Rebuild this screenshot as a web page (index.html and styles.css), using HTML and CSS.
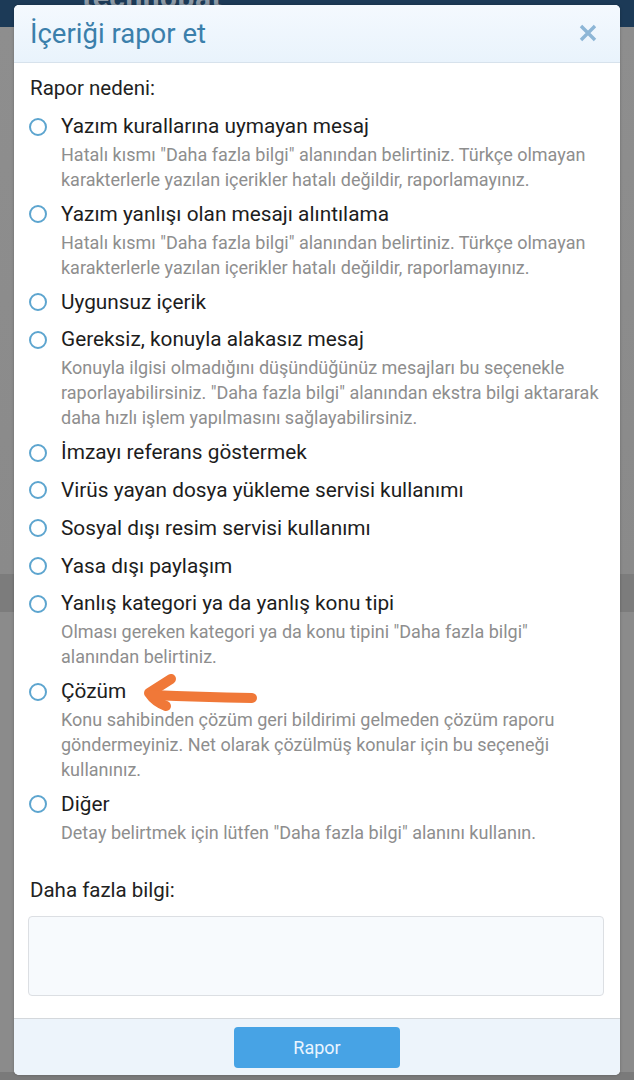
FILE: index.html
```html
<!DOCTYPE html>
<html lang="tr">
<head>
<meta charset="utf-8">
<title>İçeriği rapor et</title>
<link rel="stylesheet" href="styles.css">
</head>
<body>
<div class="backdrop-logo">technopat</div>
<div class="modal">
  <div class="modal-header">
    <h1 class="modal-title">İçeriği rapor et</h1>
    <span class="close" aria-label="Kapat">
      <svg width="18" height="18" viewBox="0 0 18 18"><path d="M2 2 L16 16 M16 2 L2 16" stroke="#8db6d6" stroke-width="3.4" stroke-linecap="butt" fill="none"/></svg>
    </span>
  </div>
  <div class="modal-body">
    <div class="field-label">Rapor nedeni:</div>
    <ul class="reasons">
      <li class="reason"><span class="radio"></span><div class="reason-text"><div class="reason-title">Yazım kurallarına uymayan mesaj</div><div class="reason-desc">Hatalı kısmı "Daha fazla bilgi" alanından belirtiniz. Türkçe olmayan<br>karakterlerle yazılan içerikler hatalı değildir, raporlamayınız.</div></div></li>
      <li class="reason"><span class="radio"></span><div class="reason-text"><div class="reason-title">Yazım yanlışı olan mesajı alıntılama</div><div class="reason-desc">Hatalı kısmı "Daha fazla bilgi" alanından belirtiniz. Türkçe olmayan<br>karakterlerle yazılan içerikler hatalı değildir, raporlamayınız.</div></div></li>
      <li class="reason"><span class="radio"></span><div class="reason-text"><div class="reason-title">Uygunsuz içerik</div></div></li>
      <li class="reason"><span class="radio"></span><div class="reason-text"><div class="reason-title">Gereksiz, konuyla alakasız mesaj</div><div class="reason-desc">Konuyla ilgisi olmadığını düşündüğünüz mesajları bu seçenekle<br>raporlayabilirsiniz. "Daha fazla bilgi" alanından ekstra bilgi aktararak<br>daha hızlı işlem yapılmasını sağlayabilirsiniz.</div></div></li>
      <li class="reason"><span class="radio"></span><div class="reason-text"><div class="reason-title">İmzayı referans göstermek</div></div></li>
      <li class="reason"><span class="radio"></span><div class="reason-text"><div class="reason-title">Virüs yayan dosya yükleme servisi kullanımı</div></div></li>
      <li class="reason"><span class="radio"></span><div class="reason-text"><div class="reason-title">Sosyal dışı resim servisi kullanımı</div></div></li>
      <li class="reason"><span class="radio"></span><div class="reason-text"><div class="reason-title">Yasa dışı paylaşım</div></div></li>
      <li class="reason"><span class="radio"></span><div class="reason-text"><div class="reason-title">Yanlış kategori ya da yanlış konu tipi</div><div class="reason-desc">Olması gereken kategori ya da konu tipini "Daha fazla bilgi"<br>alanından belirtiniz.</div></div></li>
      <li class="reason"><span class="radio"></span><div class="reason-text"><div class="reason-title">Çözüm</div><div class="reason-desc">Konu sahibinden çözüm geri bildirimi gelmeden çözüm raporu<br>göndermeyiniz. Net olarak çözülmüş konular için bu seçeneği<br>kullanınız.</div></div></li>
      <li class="reason"><span class="radio"></span><div class="reason-text"><div class="reason-title">Diğer</div><div class="reason-desc">Detay belirtmek için lütfen "Daha fazla bilgi" alanını kullanın.</div></div></li>
    </ul>
    <div class="field-label more">Daha fazla bilgi:</div>
    <textarea class="more-input"></textarea>
  </div>
  <div class="modal-footer">
    <button class="submit">Rapor</button>
  </div>
</div>
<svg class="arrow" width="125" height="45" viewBox="0 0 125 45">
  <path d="M31 7 L9 21 Q15 30 26 34" stroke="#f07838" stroke-width="10" stroke-linecap="round" stroke-linejoin="round" fill="none"/>
  <path d="M12 23 Q60 25 112 26" stroke="#f07838" stroke-width="10" stroke-linecap="round" fill="none"/>
</svg>
</body>
</html>
```
FILE: styles.css
```css
html, body {
  margin: 0;
  padding: 0;
}
body {
  width: 634px;
  height: 1080px;
  overflow: hidden;
  font-family: Roboto, "Noto Sans", sans-serif;
  background:
    linear-gradient(to bottom,
      #1c3a57 0, #1c3a57 27px,
      #8e8e8e 27px, #8a8a8a 574px,
      #7c7c7c 574px, #7c7c7c 612px,
      #8b8b8b 612px, #8b8b8b 1072px,
      #7a7a7a 1072px);
  position: relative;
  padding-top: 5px;
  box-sizing: border-box;
}
.backdrop-logo {
  position: absolute;
  left: 82px;
  top: -20px;
  font-size: 30px;
  font-weight: 700;
  color: #8d9aa6;
  letter-spacing: 0.5px;
}
.modal {
  position: relative;
  margin: 0 14px;
  width: 606px;
  background: #fff;
  border-radius: 5px;
  overflow: hidden;
  box-shadow: 0 0 3px rgba(0,0,0,0.25);
}
.modal-header {
  height: 57px;
  border-bottom: 1px solid #d7e2ec;
  background: linear-gradient(to bottom, #f4f9fe, #e9f3fc);
  display: flex;
  align-items: center;
  justify-content: space-between;
  padding: 0 23px 0 16px;
}
.modal-title {
  margin: 0;
  font-size: 27.5px;
  font-weight: 400;
  color: #3b7fab;
  line-height: 32px;
}
.close {
  display: flex;
  width: 18px;
  height: 18px;
  margin-top: -1px;
}
.modal-body {
  padding: 11px 15px 22px 15px;
}
.field-label {
  font-size: 20.5px;
  line-height: 28px;
  color: #222;
  margin-left: 1px;
  margin-bottom: 9px;
}
.field-label.more {
  margin-top: 31px;
  margin-bottom: 12px;
}
.reasons {
  list-style: none;
  margin: 0;
  padding: 0;
  display: flex;
  flex-direction: column;
  gap: 6.8px;
}
.reason {
  display: flex;
  align-items: flex-start;
  gap: 14px;
}
.radio {
  flex: none;
  width: 14px;
  height: 14px;
  border: 2px solid #5da5cf;
  border-radius: 50%;
  margin-top: 6.5px;
}
.reason-text {
  flex: 1;
  min-width: 0;
}
.reason-title {
  font-size: 20.8px;
  line-height: 31px;
  color: #1d1d1d;
}
.reason-desc {
  font-size: 18px;
  line-height: 25px;
  color: #8e8e8e;
  white-space: nowrap;
}
.more-input {
  display: block;
  width: 576px;
  height: 80px;
  box-sizing: border-box;
  border: 1px solid #dcdfe3;
  border-radius: 4px;
  background: #f7fafd;
  resize: none;
  margin-left: -1px;
}
.modal-footer {
  border-top: 1px solid #d4d8dc;
  background: #edf4fb;
  height: 57px;
  display: flex;
  justify-content: center;
  align-items: flex-start;
  padding-top: 8px;
  box-sizing: border-box;
}
.submit {
  width: 166px;
  height: 41px;
  border: none;
  border-radius: 4px;
  background: #47a3e5;
  color: #eaf5ff;
  font-family: Roboto, "Noto Sans", sans-serif;
  font-size: 18px;
}
.arrow {
  position: absolute;
  left: 140px;
  top: 672px;
}
```
